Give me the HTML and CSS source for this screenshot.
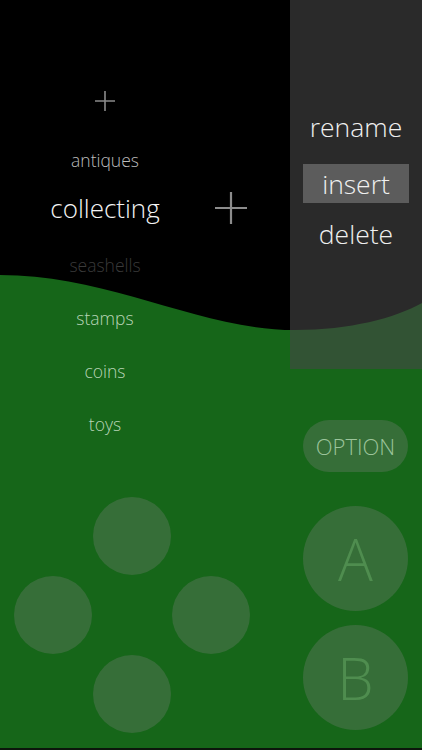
FILE: index.html
```html
<!DOCTYPE html>
<html>
<head>
<meta charset="utf-8">
<link rel="stylesheet" href="styles.css">
</head>
<body>
<div class="app">
  <div class="left">
    <div class="list">
      <div class="row plus-row">
        <svg class="plus-sm" width="20" height="20" viewBox="0 0 20 20"><path d="M10 0V20M0 10H20" stroke="#8a8a8a" stroke-width="1.6" fill="none"/></svg>
      </div>
      <div class="row item dim">antiques</div>
      <div class="row current">
        <span class="current-text">collecting</span>
        <span class="current-add">
          <svg width="32" height="32" viewBox="0 0 32 32"><path d="M16 0V32M0 16H32" stroke="#8c8c8c" stroke-width="2.2" fill="none"/></svg>
        </span>
      </div>
      <div class="row item faded">seashells</div>
      <div class="row item green">stamps</div>
      <div class="row item green">coins</div>
      <div class="row item green">toys</div>
    </div>
    <div class="dpad">
      <span></span><div class="pad"></div><span></span>
      <div class="pad"></div><span></span><div class="pad"></div>
      <span></span><div class="pad"></div><span></span>
    </div>
  </div>
  <div class="right">
    <div class="menu">
      <div class="menu-item">rename</div>
      <div class="menu-item selected">insert</div>
      <div class="menu-item">delete</div>
    </div>
    <div class="controls">
      <div class="option">OPTION</div>
      <div class="btn btn-a">A</div>
      <div class="btn btn-b">B</div>
    </div>
  </div>
</div>
</body>
</html>
```

FILE: styles.css
```css
* { box-sizing: border-box; }
html, body { margin: 0; padding: 0; }
body {
  background: #0c160c;
  width: 422px;
  height: 750px;
  overflow: hidden;
  font-family: "Open Sans", "Lato", sans-serif;
  font-weight: 300;
}
.app {
  width: 422px;
  height: 748px;
  display: flex;
  background: #166619 url("data:image/svg+xml;utf8,<svg xmlns='http://www.w3.org/2000/svg' width='422' height='750'><path d='M0 0H422V303C395 318 350 330 295 330C200 330 110 275 0 275Z' fill='black'/></svg>") no-repeat 0 0;
}
.left {
  width: 290px;
  display: flex;
  flex-direction: column;
}
.list {
  display: flex;
  flex-direction: column;
  padding-top: 91px;
}
.row {
  width: 210px;
  display: flex;
  align-items: center;
  justify-content: center;
}
.plus-row { height: 20px; }
.plus-sm { display: block; }
.item {
  height: 52px;
  font-size: 17.5px;
}
.plus-row + .item { margin-top: 23px; }
.dim { color: #bcbcbc; }
.faded { color: #3a3a3a; margin-top: 9px; }
.green { color: #b8d4b6; height: 53px; }
.current {
  width: 290px;
  height: 44px;
  display: grid;
  grid-template-columns: 210px 42px;
  justify-content: start;
  align-items: center;
}
.current-text {
  text-align: center;
  font-size: 26px;
  color: #f4f4f4;
}
.current-add {
  display: flex;
  justify-content: center;
}
.current-add svg { display: block; }
.dpad {
  margin-top: 47px;
  margin-left: 14px;
  display: grid;
  grid-template-columns: repeat(3, 79px);
  grid-template-rows: repeat(3, 79px);
}
.pad {
  width: 78px;
  height: 78px;
  border-radius: 50%;
  background: rgba(128, 128, 128, 0.3);
}
.right {
  width: 132px;
  display: flex;
  flex-direction: column;
}
.menu {
  height: 369px;
  background: rgba(70, 70, 70, 0.6);
  display: flex;
  flex-direction: column;
  align-items: center;
  padding-top: 107px;
  gap: 18px;
}
.menu-item {
  width: 106px;
  height: 39px;
  display: flex;
  align-items: center;
  justify-content: center;
  font-size: 26.5px;
  color: #f0f0f0;
}
.menu-item.selected {
  background: #5c5c5c;
}
.menu-item.selected + .menu-item { margin-top: -7px; }
.controls {
  display: flex;
  flex-direction: column;
  padding-left: 13px;
  padding-top: 51px;
}
.option {
  width: 105px;
  height: 52px;
  border-radius: 26px;
  background: rgba(128, 128, 128, 0.3);
  color: #9cc49b;
  font-size: 22px;
  display: flex;
  align-items: center;
  justify-content: center;
}
.btn {
  width: 105px;
  height: 105px;
  border-radius: 50%;
  background: rgba(128, 128, 128, 0.3);
  color: #4f8d4f;
  font-size: 58px;
  display: flex;
  align-items: center;
  justify-content: center;
}
.btn-a { margin-top: 34px; }
.btn-b { margin-top: 14px; }
```
